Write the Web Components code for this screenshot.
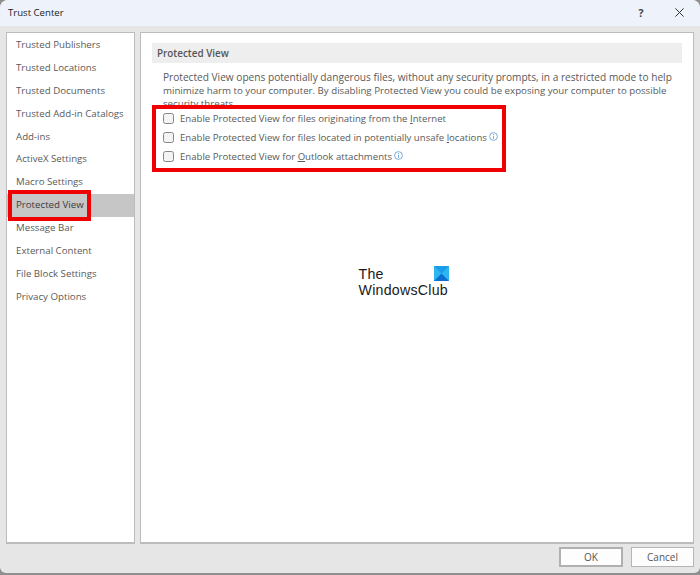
<!DOCTYPE html>
<html lang="en">
<head>
<meta charset="utf-8">
<title>Trust Center</title>
<style>
  html, body { margin: 0; padding: 0; background: #8f8f8f; }
  body { width: 700px; height: 575px; overflow: hidden; font-family: "Open Sans", "Liberation Sans", sans-serif; }
  .tight { font-size: 9.7px; }
</style>
</head>
<body>
<tc-dialog heading="Trust Center">
  <tc-nav slot="nav">
    <tc-nav-item>Trusted Publishers</tc-nav-item>
    <tc-nav-item>Trusted Locations</tc-nav-item>
    <tc-nav-item>Trusted Documents</tc-nav-item>
    <tc-nav-item>Trusted Add-in Catalogs</tc-nav-item>
    <tc-nav-item>Add-ins</tc-nav-item>
    <tc-nav-item>ActiveX Settings</tc-nav-item>
    <tc-nav-item>Macro Settings</tc-nav-item>
    <tc-nav-item selected marked>Protected View</tc-nav-item>
    <tc-nav-item>Message Bar</tc-nav-item>
    <tc-nav-item>External Content</tc-nav-item>
    <tc-nav-item>File Block Settings</tc-nav-item>
    <tc-nav-item>Privacy Options</tc-nav-item>
  </tc-nav>
  <tc-section slot="main" heading="Protected View">
    <span slot="intro">Protected View opens potentially dangerous files, without any security prompts, in a restricted mode to help<br><span class="tight">minimize harm to your computer. By disabling Protected View you could be exposing your computer to possible<br>security threats.</span></span>
    <tc-check>Enable Protected View for files originating from the <u>I</u>nternet</tc-check>
    <tc-check info>Enable Protected View for files located in potentially unsafe <u>l</u>ocations</tc-check>
    <tc-check info>Enable Protected View for <u>O</u>utlook attachments</tc-check>
  </tc-section>
  <tc-watermark slot="main"></tc-watermark>
  <tc-button slot="actions" primary>OK</tc-button>
  <tc-button slot="actions">Cancel</tc-button>
</tc-dialog>

<script>
class TcDialog extends HTMLElement {
  constructor() {
    super();
    this.attachShadow({ mode: 'open' });
    this.shadowRoot.innerHTML = `
      <style>
        :host {
          display: flex;
          flex-direction: column;
          width: 700px;
          height: 573px;
          box-sizing: border-box;
          background: #e6e6e6;
          border-radius: 8px 8px 6px 6px;
          overflow: hidden;
          color: #444;
        }
        .title {
          display: flex;
          align-items: center;
          height: 26px;
          flex: none;
          background: #eef2fb;
          padding: 0 0 1px 8px;
          box-sizing: border-box;
          font-size: 9.6px;
          color: #222;
        }
        .title span { flex: 1; }
        .title b {
          width: 12px;
          text-align: center;
          font-weight: 700;
          font-size: 10.5px;
          color: #444;
        }
        .title svg { width: 9px; height: 9px; margin: 0 16px 0 28px; }
        .body {
          display: grid;
          grid-template-columns: 129px 554px;
          column-gap: 5px;
          padding: 6px 6px 0 6px;
          height: 512px;
          flex: none;
        }
        .panel {
          background: #fff;
          border: 1px solid #bcbcbc;
          border-bottom-width: 2px;
          box-sizing: border-box;
          position: relative;
          overflow: hidden;
        }
        .actions {
          display: flex;
          justify-content: flex-end;
          gap: 8px;
          padding: 3px 6px 0 0;
        }
      </style>
      <div class="title">
        <span></span>
        <b>?</b>
        <svg viewBox="0 0 9 9" fill="none" stroke="#333" stroke-width="1"><path d="M.4 .4 L8.6 8.6 M8.6 .4 L.4 8.6"/></svg>
      </div>
      <div class="body">
        <div class="panel"><slot name="nav"></slot></div>
        <div class="panel"><slot name="main"></slot></div>
      </div>
      <div class="actions"><slot name="actions"></slot></div>
    `;
    this.shadowRoot.querySelector('.title span').textContent = this.getAttribute('heading');
  }
}

class TcNav extends HTMLElement {
  constructor() {
    super();
    this.attachShadow({ mode: 'open' });
    this.shadowRoot.innerHTML = `
      <style>
        :host { display: flex; flex-direction: column; padding-top: 1px; }
      </style>
      <slot></slot>
    `;
  }
}

class TcNavItem extends HTMLElement {
  constructor() {
    super();
    this.attachShadow({ mode: 'open' });
    this.shadowRoot.innerHTML = `
      <style>
        :host {
          display: block;
          height: 22.9px;
          line-height: 22.9px;
          padding-left: 9px;
          font-size: 9.7px;
          color: #5a5a5a;
          white-space: nowrap;
          position: relative;
        }
        :host([selected]) { background: #c6c6c6; color: #3c3c3c; }
        .mark {
          display: none;
          position: absolute;
          left: 1px;
          top: -4px;
          width: 83px;
          height: 31px;
          box-sizing: border-box;
          border: 4px solid #f00000;
        }
        :host([marked]) .mark { display: block; }
      </style>
      <slot></slot><div class="mark"></div>
    `;
  }
}

class TcSection extends HTMLElement {
  constructor() {
    super();
    this.attachShadow({ mode: 'open' });
    this.shadowRoot.innerHTML = `
      <style>
        :host { display: block; padding: 10px 11px 0 11px; color: #5a5a5a; }
        h2 {
          margin: 0;
          height: 20px;
          line-height: 20px;
          padding-left: 5px;
          background: #eeeeee;
          font-size: 9.9px;
          font-weight: 600;
          color: #555;
        }
        .intro {
          margin: 8px 0 0 11px;
          height: 37px;
          font-size: 10.15px;
          line-height: 12.6px;
          white-space: nowrap;
          overflow: hidden;
        }
        .checks {
          position: relative;
          display: flex;
          flex-direction: column;
          padding: 0.5px 0 0 10.5px;
        }
        .mark {
          position: absolute;
          left: 0;
          top: -3px;
          width: 354px;
          height: 67px;
          box-sizing: border-box;
          border: 4px solid #f00000;
          pointer-events: none;
        }
      </style>
      <h2></h2>
      <div class="intro"><slot name="intro"></slot></div>
      <div class="checks"><slot></slot><div class="mark"></div></div>
    `;
    this.shadowRoot.querySelector('h2').textContent = this.getAttribute('heading');
  }
}

class TcCheck extends HTMLElement {
  constructor() {
    super();
    this.attachShadow({ mode: 'open' });
    this.shadowRoot.innerHTML = `
      <style>
        :host {
          display: flex;
          align-items: center;
          height: 19px;
          font-size: 9.6px;
          color: #5a5a5a;
          white-space: nowrap;
        }
        .box {
          width: 9px;
          height: 9px;
          border: 1px solid #858585;
          border-radius: 2.5px;
          background: #f4f4f4;
          margin-right: 6.5px;
          flex: none;
        }
        svg { display: none; width: 9px; height: 9px; margin-left: 2px; margin-top: -1px; }
        :host([info]) svg { display: block; }
      </style>
      <span class="box"></span>
      <span><slot></slot></span>
      <svg viewBox="0 0 9 9" fill="none" stroke="#5b9bd5" stroke-width=".8">
        <circle cx="4.5" cy="4.5" r="3.9"/><path d="M4.5 3.7V7M4.5 2V3"/>
      </svg>
    `;
  }
}

class TcButton extends HTMLElement {
  constructor() {
    super();
    this.attachShadow({ mode: 'open' });
    this.shadowRoot.innerHTML = `
      <style>
        :host {
          display: block;
          width: 63px;
          height: 20px;
          box-sizing: border-box;
          border: 1px solid #b5b5b5;
          background: #fdfdfd;
          text-align: center;
          font-size: 10px;
          line-height: 18px;
          color: #555;
        }
        :host([primary]) { width: 64px; border: 2px solid #b0b0b0; line-height: 16px; }
      </style>
      <slot></slot>
    `;
  }
}

class TcWatermark extends HTMLElement {
  constructor() {
    super();
    this.attachShadow({ mode: 'open' });
    this.shadowRoot.innerHTML = `
      <style>
        :host {
          position: absolute;
          left: 217.5px;
          top: 233px;
          width: 95px;
          height: 34px;
          font-family: "Liberation Sans", Arial, sans-serif;
          font-size: 14.2px;
          line-height: 16.4px;
          letter-spacing: .25px;
          color: #1a1a1a;
        }
        svg { position: absolute; left: 75px; top: 0; width: 15px; height: 15px; }
      </style>
      <div>The</div>
      <div>WindowsClub</div>
      <svg viewBox="0 0 15 15">
        <path d="M0 0 H15 V15 H0 Z" fill="#2db6f2"/>
        <path d="M0 0 L15 0 L7.5 7.5 Z" fill="#1a9de8"/>
        <path d="M0 15 L7.5 7.5 L15 15 Z" fill="#0b6fd0"/>
      </svg>
    `;
  }
}

customElements.define('tc-dialog', TcDialog);
customElements.define('tc-nav', TcNav);
customElements.define('tc-nav-item', TcNavItem);
customElements.define('tc-section', TcSection);
customElements.define('tc-check', TcCheck);
customElements.define('tc-button', TcButton);
customElements.define('tc-watermark', TcWatermark);
</script>
</body>
</html>
